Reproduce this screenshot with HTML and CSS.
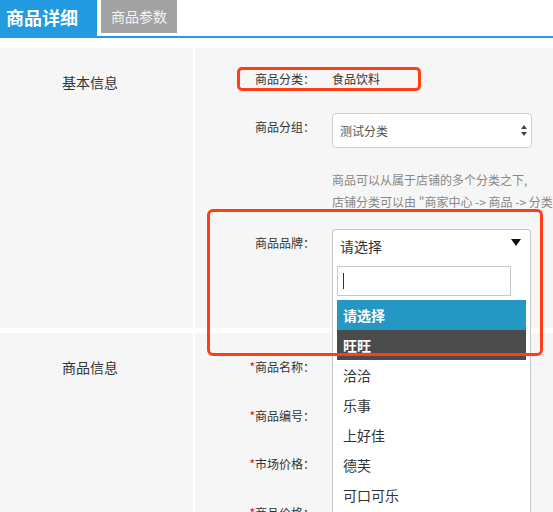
FILE: index.html
```html
<!DOCTYPE html>
<html lang="zh-CN">
<head>
<meta charset="utf-8">
<title>商品详细</title>
<link rel="stylesheet" href="styles.css">
</head>
<body>
<div class="page">
  <div class="tabs">
    <div class="tab tab-active">商品详细</div>
    <div class="tab tab-idle">商品参数</div>
  </div>
  <div class="sections">
    <div class="section section-basic">
      <div class="side">基本信息</div>
      <div class="main">
        <div class="row">
          <span class="label">商品分类：</span>
          <span class="value">食品饮料</span>
        </div>
        <div class="row row-group">
          <span class="label label-offset">商品分组：</span>
          <div class="select">
            <span>测试分类</span>
            <svg class="updown" width="6" height="11" viewBox="0 0 6 11"><path d="M3 0 L6 4 L0 4 Z M0 7 L6 7 L3 11 Z" fill="#444"/></svg>
          </div>
        </div>
        <div class="help">
          <p>商品可以从属于店铺的多个分类之下,</p>
          <p>店铺分类可以由 "商家中心 -&gt; 商品 -&gt; 分类管理" 进行管理</p>
        </div>
        <div class="row row-brand">
          <span class="label label-offset">商品品牌：</span>
          <div class="combo">
            <div class="dropdown">
              <div class="dd-head">
                <span>请选择</span>
                <svg class="dd-arrow" width="10" height="7" viewBox="0 0 10 7"><path d="M0 0 L10 0 L5 7 Z" fill="#111"/></svg>
              </div>
              <div class="dd-search"><span class="caret"></span></div>
              <ul class="dd-list">
                <li class="dd-item dd-selected">请选择</li>
                <li class="dd-item dd-hover">旺旺</li>
                <li class="dd-item">洽洽</li>
                <li class="dd-item">乐事</li>
                <li class="dd-item">上好佳</li>
                <li class="dd-item">德芙</li>
                <li class="dd-item">可口可乐</li>
              </ul>
            </div>
          </div>
        </div>
      </div>
    </div>
    <div class="section section-info">
      <div class="side">商品信息</div>
      <div class="main">
        <div class="row row-field"><span class="label"><em class="req">*</em>商品名称：</span></div>
        <div class="row row-field"><span class="label"><em class="req">*</em>商品编号：</span></div>
        <div class="row row-field"><span class="label"><em class="req">*</em>市场价格：</span></div>
        <div class="row row-field"><span class="label"><em class="req">*</em>商品价格：</span></div>
      </div>
    </div>
  </div>
  <div class="mark mark-cat"></div>
  <div class="mark mark-brand"></div>
</div>
</body>
</html>
```
FILE: styles.css
```css
html, body {
  margin: 0;
  padding: 0;
  overflow: hidden;
  background: #fff;
}
body {
  font-family: "Noto Sans CJK SC", "Noto Sans", sans-serif;
  color: #333;
}
.page {
  position: relative;
  width: 553px;
  height: 512px;
  overflow: hidden;
}
.tabs {
  display: flex;
  align-items: flex-start;
  height: 36px;
  border-bottom: 2px solid #229be0;
}
.tab {
  box-sizing: border-box;
  color: #fff;
  white-space: nowrap;
}
.tab-active {
  width: 97px;
  height: 36px;
  background: #229be0;
  font-size: 18px;
  font-weight: bold;
  line-height: 34px;
  padding-left: 6px;
}
.tab-idle {
  margin-left: 4px;
  width: 76px;
  height: 33px;
  background: #a2a2a2;
  font-size: 14px;
  line-height: 32px;
  padding-left: 10px;
  color: #f4f4f4;
}
.sections {
  margin-top: 10px;
  display: flex;
  flex-direction: column;
  gap: 5px;
}
.section {
  display: flex;
  gap: 2px;
}
.section-basic {
  height: 280px;
}
.section-info {
  height: 200px;
}
.side {
  box-sizing: border-box;
  width: 193px;
  flex-shrink: 0;
  background: #f6f6f6;
  padding: 24px 0 0 62px;
  font-size: 14px;
  line-height: 20px;
}
.main {
  flex: 1;
  min-width: 0;
  background: #f6f6f6;
  padding-top: 21px;
}
.section-info .main {
  padding-top: 24px;
}
.row {
  display: flex;
  align-items: flex-start;
}
.label {
  width: 120px;
  flex-shrink: 0;
  text-align: right;
  font-size: 12px;
  line-height: 20px;
  white-space: nowrap;
}
.label-offset {
  padding-top: 4px;
}
.value {
  margin-left: 17px;
  font-size: 12px;
  line-height: 20px;
}
.row-group {
  margin-top: 24px;
}
.select {
  position: relative;
  box-sizing: border-box;
  margin-left: 17px;
  width: 200px;
  height: 35px;
  border: 1px solid #cfcfcf;
  border-radius: 4px;
  background: #fff;
  font-size: 12px;
  line-height: 33px;
  padding-left: 7px;
  color: #555;
}
.updown {
  position: absolute;
  right: 4px;
  top: 11px;
}
.help {
  margin: 21px 0 0 137px;
  font-size: 12px;
  line-height: 22px;
  color: #888;
  white-space: nowrap;
}
.help p {
  margin: 0;
}
.row-brand {
  margin-top: 16px;
}
.combo {
  position: relative;
  margin-left: 17px;
  width: 199px;
  height: 35px;
}
.dropdown {
  position: absolute;
  top: 0;
  left: 0;
  z-index: 2;
  box-sizing: border-box;
  width: 199px;
  height: 320px;
  border: 1px solid #c6c6c6;
  border-bottom: none;
  border-radius: 4px 4px 0 0;
  background: #fff;
}
.dd-head {
  position: relative;
  height: 33px;
  padding-left: 7px;
  font-size: 14px;
  line-height: 33px;
  color: #333;
}
.dd-arrow {
  position: absolute;
  right: 9px;
  top: 9px;
}
.dd-search {
  position: relative;
  box-sizing: border-box;
  margin: 3px 0 0 4px;
  width: 174px;
  height: 30px;
  border: 1px solid #c8c8c8;
  background: #fff;
}
.caret {
  position: absolute;
  left: 5px;
  top: 6px;
  width: 1px;
  height: 16px;
  background: #333;
}
.dd-list {
  list-style: none;
  margin: 4px 4px 0 4px;
  padding: 0;
}
.dd-item {
  height: 30px;
  line-height: 30px;
  padding-left: 6px;
  font-size: 14px;
  color: #333;
}
.dd-selected {
  background: #2597c4;
  color: #fff;
  font-weight: bold;
}
.dd-hover {
  background: #4b4b4b;
  color: #fff;
  font-weight: bold;
}
.row-field {
  height: 48.5px;
}
.req {
  font-style: normal;
  color: #f00;
}
.mark {
  position: absolute;
  z-index: 5;
  box-sizing: border-box;
  border: 3px solid #ff3d17;
}
.mark-cat {
  left: 237px;
  top: 67px;
  width: 184px;
  height: 24px;
  border-radius: 5px;
}
.mark-brand {
  left: 207px;
  top: 209px;
  width: 336px;
  height: 147px;
  border-radius: 6px;
}
```
